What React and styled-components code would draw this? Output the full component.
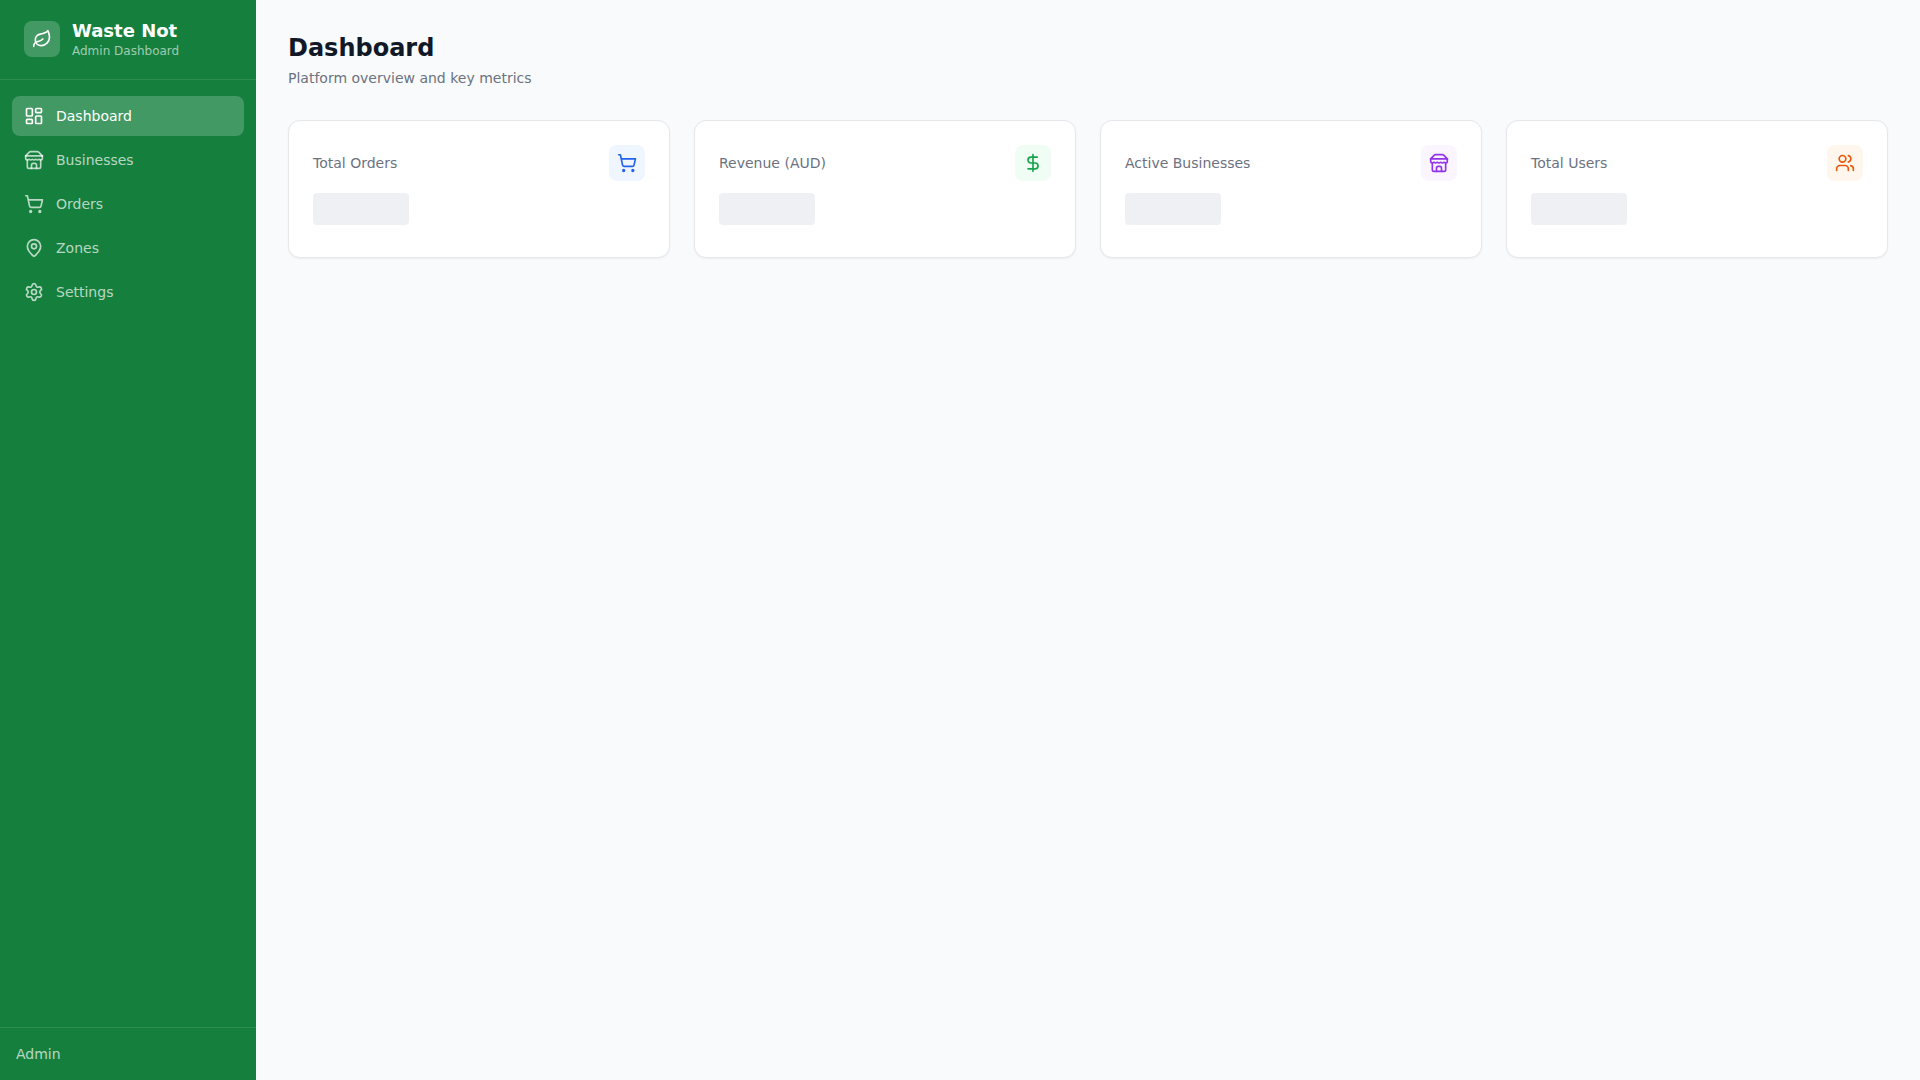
import React from 'react'
import styled, { createGlobalStyle } from 'styled-components'
import {
  DollarSign,
  LayoutDashboard,
  Leaf,
  MapPin,
  Settings,
  ShoppingCart,
  Users,
} from 'lucide-react'

// storefront with a straight awning edge
const Store = ({ size }) => (
  <svg
    width={size}
    height={size}
    viewBox="0 0 24 24"
    fill="none"
    stroke="currentColor"
    strokeWidth="2"
    strokeLinecap="round"
    strokeLinejoin="round"
    aria-hidden="true"
  >
    <path d="m2 7 4.41-4.41A2 2 0 0 1 7.83 2h8.34a2 2 0 0 1 1.42.59L22 7" />
    <path d="M4 12v8a2 2 0 0 0 2 2h12a2 2 0 0 0 2-2v-8" />
    <path d="M15 22v-4a2 2 0 0 0-2-2h-2a2 2 0 0 0-2 2v4" />
    <path d="M2 7h20" />
    <path d="M22 7v3a2 2 0 0 1-2 2a2.7 2.7 0 0 1-1.59-.63.7.7 0 0 0-.82 0A2.7 2.7 0 0 1 16 12a2.7 2.7 0 0 1-1.59-.63.7.7 0 0 0-.82 0A2.7 2.7 0 0 1 12 12a2.7 2.7 0 0 1-1.59-.63.7.7 0 0 0-.82 0A2.7 2.7 0 0 1 8 12a2.7 2.7 0 0 1-1.59-.63.7.7 0 0 0-.82 0A2.7 2.7 0 0 1 4 12a2 2 0 0 1-2-2V7" />
  </svg>
)

const navItems = [
  { label: 'Dashboard', icon: LayoutDashboard, active: true },
  { label: 'Businesses', icon: Store },
  { label: 'Orders', icon: ShoppingCart },
  { label: 'Zones', icon: MapPin },
  { label: 'Settings', icon: Settings },
]

const stats = [
  { label: 'Total Orders', icon: ShoppingCart, color: '#2563eb', tint: '#eff6ff' },
  { label: 'Revenue (AUD)', icon: DollarSign, color: '#16a34a', tint: '#f0fdf4' },
  { label: 'Active Businesses', icon: Store, color: '#9333ea', tint: '#faf5ff' },
  { label: 'Total Users', icon: Users, color: '#ea580c', tint: '#fff7ed' },
]

const App = () => (
  <>
    <GlobalStyle />
    <Layout>
      <Sidebar>
        <Brand>
          <Logo>
            <Leaf size={20} />
          </Logo>
          <div>
            <BrandName>Waste Not</BrandName>
            <BrandInfo>Admin Dashboard</BrandInfo>
          </div>
        </Brand>
        <Nav>
          {navItems.map(({ label, icon: Icon, active }) => (
            <NavLink
              key={label}
              href={`#${label.toLowerCase()}`}
              $active={active}
              aria-current={active ? 'page' : undefined}
            >
              <Icon size={20} />
              {label}
            </NavLink>
          ))}
        </Nav>
        <UserBar>Admin</UserBar>
      </Sidebar>

      <Main>
        <Title>Dashboard</Title>
        <Subtitle>Platform overview and key metrics</Subtitle>
        <Stats>
          {stats.map(({ label, icon: Icon, color, tint }) => (
            <Card key={label}>
              <CardHeader>
                <CardLabel>{label}</CardLabel>
                <CardIcon $color={color} $tint={tint}>
                  <Icon size={20} />
                </CardIcon>
              </CardHeader>
              <Skeleton />
            </Card>
          ))}
        </Stats>
      </Main>
    </Layout>
  </>
)

const GlobalStyle = createGlobalStyle`
  *,
  *::before,
  *::after {
    box-sizing: border-box;
  }

  body {
    margin: 0;
    background: #f9fafb;
    color: #111827;
    font-family: 'DejaVu Sans', sans-serif;
    font-size: 14px;
    line-height: 20px;
  }

  h1,
  p {
    margin: 0;
  }
`

const Layout = styled.div`
  display: flex;
  min-height: 100vh;
`

const Sidebar = styled.aside`
  background: #15803d;
  color: #fff;
  display: flex;
  flex: none;
  flex-direction: column;
  width: 256px;
`

const Brand = styled.div`
  align-items: center;
  border-bottom: 1px solid rgba(255, 255, 255, 0.1);
  display: flex;
  gap: 12px;
  padding: 20px 24px 21px;
`

const Logo = styled.div`
  align-items: center;
  background: rgba(255, 255, 255, 0.2);
  border-radius: 8px;
  display: flex;
  height: 36px;
  justify-content: center;
  width: 36px;
`

const BrandName = styled.p`
  font-size: 18px;
  font-weight: 700;
  line-height: 22px;
`

const BrandInfo = styled.p`
  color: rgba(255, 255, 255, 0.6);
  font-size: 12px;
  line-height: 14px;

  ${BrandName} + & {
    margin-top: 2px;
  }
`

const Nav = styled.nav`
  display: flex;
  flex: 1;
  flex-direction: column;
  gap: 4px;
  padding: 16px 12px;
`

const NavLink = styled.a`
  align-items: center;
  background: ${p => (p.$active ? 'rgba(255, 255, 255, 0.2)' : 'transparent')};
  border-radius: 8px;
  color: ${p => (p.$active ? '#fff' : 'rgba(255, 255, 255, 0.7)')};
  display: flex;
  gap: 12px;
  padding: 10px 12px;
  text-decoration: none;

  &:hover {
    color: #fff;
  }
`

const UserBar = styled.div`
  border-top: 1px solid rgba(255, 255, 255, 0.1);
  color: rgba(255, 255, 255, 0.7);
  padding: 16px;
`

const Main = styled.main`
  flex: 1;
  min-width: 0;
  padding: 32px;
`

const Title = styled.h1`
  font-size: 24px;
  font-weight: 700;
  line-height: 32px;
`

const Subtitle = styled.p`
  color: #6b7280;
  margin-top: 4px;
`

const Stats = styled.section`
  display: grid;
  gap: 24px;
  grid-template-columns: repeat(4, 1fr);
  margin-top: 32px;

  @media (max-width: 1100px) {
    grid-template-columns: repeat(2, 1fr);
  }
`

const Card = styled.article`
  background: #fff;
  border: 1px solid #e5e7eb;
  border-radius: 12px;
  box-shadow: 0 1px 2px rgba(0, 0, 0, 0.05);
  padding: 24px 24px 32px;
`

const CardHeader = styled.div`
  align-items: center;
  display: flex;
  justify-content: space-between;
  margin-bottom: 12px;
`

const CardLabel = styled.p`
  color: #6b7280;
`

const CardIcon = styled.div`
  align-items: center;
  background: ${p => p.$tint};
  border-radius: 8px;
  color: ${p => p.$color};
  display: flex;
  height: 36px;
  justify-content: center;
  width: 36px;
`

const Skeleton = styled.div`
  background: #eff0f4;
  border-radius: 4px;
  height: 32px;
  width: 96px;
`

export default App
